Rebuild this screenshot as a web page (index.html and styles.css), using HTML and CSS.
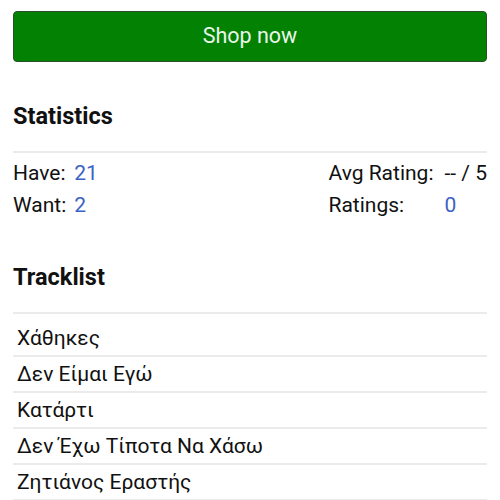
FILE: index.html
```html
<!DOCTYPE html>
<html lang="el">
<head>
    <meta charset="UTF-8">
    <meta name="viewport" content="width=device-width, initial-scale=1.0">
    <title>Release</title>
    <link rel="stylesheet" href="styles.css">
</head>
<body>
    <div class="page">
        <button class="shop-btn">Shop now</button>

        <h2 class="section-title">Statistics</h2>
        <div class="stats">
            <div class="stats-table">
                <span class="stat-label">Have:</span><span class="stat-value link">21</span>
                <span class="stat-label">Want:</span><span class="stat-value link">2</span>
            </div>
            <div class="stats-table ratings">
                <span class="stat-label">Avg Rating:</span><span class="stat-value">-- / 5</span>
                <span class="stat-label">Ratings:</span><span class="stat-value link">0</span>
            </div>
        </div>

        <h2 class="section-title tracklist-title">Tracklist</h2>
        <ul class="tracklist">
            <li>Χάθηκες</li>
            <li>Δεν Είμαι Εγώ</li>
            <li>Κατάρτι</li>
            <li>Δεν Έχω Τίποτα Να Χάσω</li>
            <li>Ζητιάνος Εραστής</li>
        </ul>
    </div>
</body>
</html>
```

FILE: styles.css
```css
body {
    margin: 0;
    font-family: Roboto, "Noto Sans", sans-serif;
    font-size: 21px;
    color: #111;
    background-color: #fff;
}

.page {
    padding: 11px 13px 0;
}

.shop-btn {
    display: block;
    width: 100%;
    height: 51px;
    background-color: #038103;
    color: #eaf6ea;
    border: 1px solid #2b4f2b;
    border-radius: 4px;
    font-family: Roboto, sans-serif;
    font-size: 21.5px;
    padding: 0 0 2px;
}

.section-title {
    font-size: 23.5px;
    font-weight: bold;
    color: #111;
    margin: 0;
    padding: 41px 0 22px;
    line-height: 26px;
    border-bottom: 2px solid #ebebeb;
}

.stats {
    display: flex;
    justify-content: space-between;
    padding-top: 4px;
}

.stats-table {
    display: grid;
    grid-template-columns: auto auto;
    column-gap: 8px;
    line-height: 32px;
}

.ratings {
    column-gap: 11px;
}

.link {
    color: #3b63c4;
}

.tracklist-title {
    padding-top: 43px;
}

.tracklist {
    list-style: none;
    margin: 0;
    padding: 7px 0 0;
}

.tracklist li {
    padding: 0 4px;
    line-height: 34px;
    border-bottom: 2px solid #ebebeb;
}
```
